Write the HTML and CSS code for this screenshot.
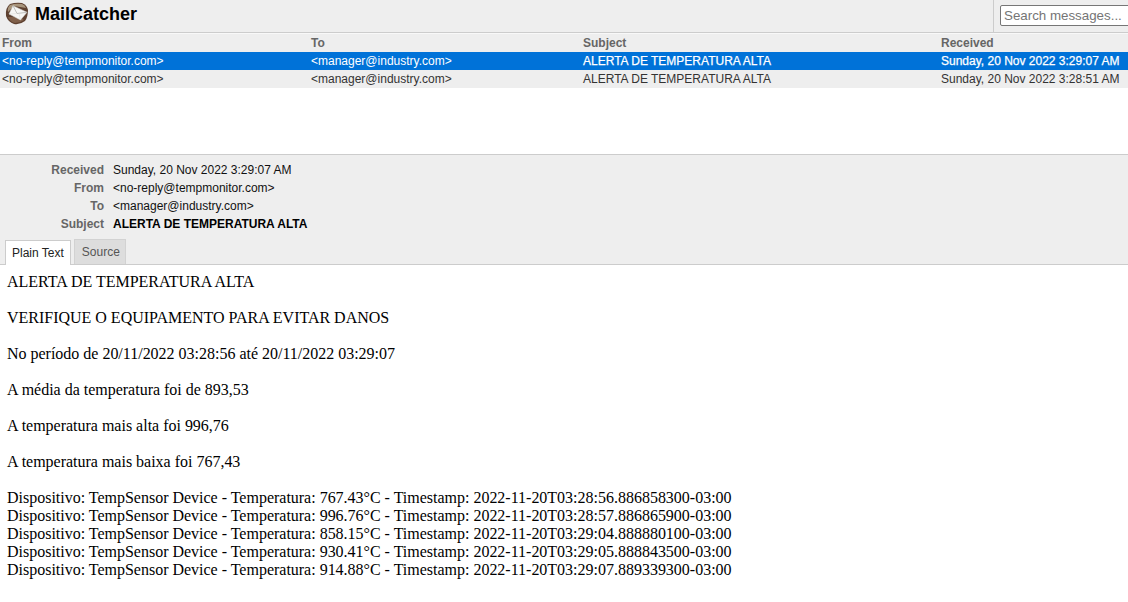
FILE: index.html
```html
<!DOCTYPE html>
<html lang="en">
<head>
<meta charset="utf-8">
<title>MailCatcher</title>
<link rel="stylesheet" href="styles.css">
</head>
<body>
<header class="topbar">
  <h1 class="brand">
    <svg class="logo" width="24" height="24" viewBox="0 0 24 24">
      <path d="M5 2 Q11 0 17 1 Q22 3 23 8 Q23 15 20 19 Q15 23 9 22 Q3 20 1 14 Q0 6 5 2Z" fill="#5e4130"/>
      <path d="M5 3 Q11 1 17 2 Q20 3 21 6 L9 4 L3 10 Q2 6 5 3Z" fill="#a8957c"/>
      <path d="M3 15 Q5 20 10 21 Q15 21 19 18 L16 16 L8 15Z" fill="#80604a"/>
      <path d="M8 3.7 L22 10.3 L15.5 18 L4 12Z" fill="#f6f6f4" stroke="#d4d4d0" stroke-width=".5"/>
      <path d="M8 3.7 L12 11.5 L22 10.3" fill="none" stroke="#b0b0ac" stroke-width=".8"/>
      <path d="M4 12 L12 11.5 M15.5 18 L14 11.3" fill="none" stroke="#dcdcd8" stroke-width=".5"/>
    </svg>
    <span>MailCatcher</span>
  </h1>
  <div class="search"><input class="search-input" type="text" placeholder="Search messages..."></div>
</header>
<section class="list">
  <div class="row head"><div>From</div><div>To</div><div>Subject</div><div>Received</div></div>
  <div class="row selected"><div>&lt;no-reply@tempmonitor.com&gt;</div><div>&lt;manager@industry.com&gt;</div><div>ALERTA DE TEMPERATURA ALTA</div><div>Sunday, 20 Nov 2022 3:29:07 AM</div></div>
  <div class="row"><div>&lt;no-reply@tempmonitor.com&gt;</div><div>&lt;manager@industry.com&gt;</div><div>ALERTA DE TEMPERATURA ALTA</div><div>Sunday, 20 Nov 2022 3:28:51 AM</div></div>
</section>
<section class="meta">
  <dl class="fields">
    <dt>Received</dt><dd>Sunday, 20 Nov 2022 3:29:07 AM</dd>
    <dt>From</dt><dd>&lt;no-reply@tempmonitor.com&gt;</dd>
    <dt>To</dt><dd>&lt;manager@industry.com&gt;</dd>
    <dt>Subject</dt><dd class="strong">ALERTA DE TEMPERATURA ALTA</dd>
  </dl>
  <nav class="tabs"><span class="tab active">Plain Text</span><span class="tab">Source</span></nav>
</section>
<main class="body">
  <p>ALERTA DE TEMPERATURA ALTA</p>
  <p>VERIFIQUE O EQUIPAMENTO PARA EVITAR DANOS</p>
  <p>No período de 20/11/2022 03:28:56 até 20/11/2022 03:29:07</p>
  <p>A média da temperatura foi de 893,53</p>
  <p>A temperatura mais alta foi 996,76</p>
  <p>A temperatura mais baixa foi 767,43</p>
  <p>Dispositivo: TempSensor Device - Temperatura: 767.43°C - Timestamp: 2022-11-20T03:28:56.886858300-03:00<br>
  Dispositivo: TempSensor Device - Temperatura: 996.76°C - Timestamp: 2022-11-20T03:28:57.886865900-03:00<br>
  Dispositivo: TempSensor Device - Temperatura: 858.15°C - Timestamp: 2022-11-20T03:29:04.888880100-03:00<br>
  Dispositivo: TempSensor Device - Temperatura: 930.41°C - Timestamp: 2022-11-20T03:29:05.888843500-03:00<br>
  Dispositivo: TempSensor Device - Temperatura: 914.88°C - Timestamp: 2022-11-20T03:29:07.889339300-03:00</p>
</main>
</body>
</html>
```
FILE: styles.css
```css
* { box-sizing: border-box; }
html, body { margin: 0; height: 100%; overflow: hidden; }
body { background: #fff; color: #000; font-family: "Liberation Sans", Arial, sans-serif; font-size: 12px; }

.topbar { height: 33px; display: flex; justify-content: space-between; background: #eee; border-bottom: 1px solid #ccc; }
.brand { margin: 0; display: flex; align-items: center; gap: 6px; padding: 0 0 4px 5px; font-size: 18px; font-weight: bold; line-height: 28px; }
.logo { display: block; }
.search { width: 135px; height: 32px; padding: 5px 0 0 6px; border-left: 1px solid #ccc; overflow: hidden; }
.search-input { display: block; width: 150px; height: 21px; padding: 0 3px; border: 1px solid #767676; border-radius: 2px; background: #fff; font: 13.33px "Liberation Sans", Arial, sans-serif; }
.search-input::placeholder { color: #757575; opacity: 1; }

.list { height: 122px; border-bottom: 1px solid #ccc; }
.row { display: grid; grid-template-columns: 309px 272px 358px 1fr; height: 18px; line-height: 18px; padding: 0 2px; background: #eee; color: #333; white-space: nowrap; }
.row.head { height: 19px; line-height: 18px; color: #666; font-weight: bold; border-top: 1px solid #f8f8f8; }
.row.selected { background: #0072d8; color: #fff; }
.row.selected div:nth-child(n+3) { -webkit-text-stroke: .25px #fff; }

.meta { height: 110px; background: #eee; border-bottom: 1px solid #ccc; padding-top: 6px; }
.fields { margin: 0; display: grid; grid-template-columns: 104px 1fr; column-gap: 9px; grid-auto-rows: 18px; line-height: 18px; }
.fields dt { text-align: right; color: #666; font-weight: bold; }
.fields dd { margin: 0; color: #111; }
.fields dd.strong { font-weight: bold; color: #000; }

.tabs { display: flex; align-items: flex-start; gap: 3px; padding: 6px 0 0 5px; }
.tab { height: 25px; padding: 0 5px 0 7px; line-height: 24px; background: #ddd; color: #555; border: 1px solid #d2d2d2; border-bottom: 0; }
.tab.active { margin-top: 1px; padding: 0 6px; line-height: 25px; background: #fff; color: #222; border-color: #ccc; position: relative; z-index: 1; }

.body { padding: 8px 7px; font-family: "Liberation Serif", "Times New Roman", serif; font-size: 16px; line-height: 18px; color: #000; letter-spacing: -.01px; }
.body p { margin: 0 0 18px; }
```
